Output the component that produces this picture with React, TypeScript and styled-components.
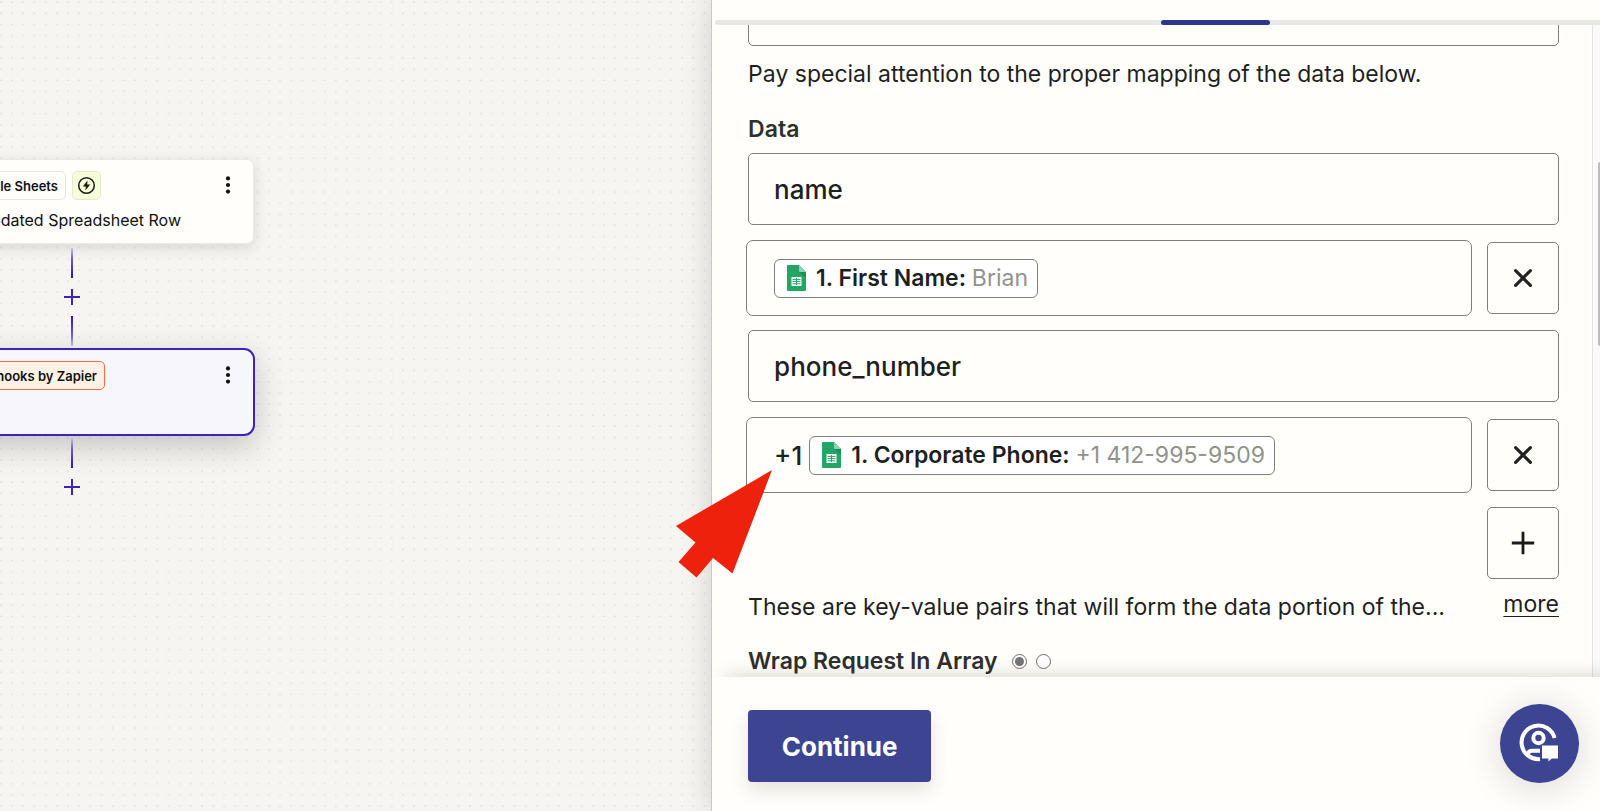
import React from "react";
import styled, { createGlobalStyle, css } from "styled-components";

const GlobalStyle = createGlobalStyle`
  * { box-sizing: border-box; }
  html, body, #root { height: 100%; }
  body {
    margin: 0;
    overflow: hidden;
    font-family: Inter, "Liberation Sans", sans-serif;
    color: #1f1f1f;
    background: #fffdf9;
  }
  button, input { font: inherit; color: inherit; }
`;

const line = "#7f7e7b";
const paper = "#fffefa";
const canvasTone = "#f6f5f2";
const violet = "#3f22bb";
const indigo = "#3d4592";

const Layout = styled.main`
  display: grid;
  grid-template-columns: 4fr 5fr;
  height: 100vh;
`;

/* ---------- canvas ---------- */

const Canvas = styled.section`
  position: relative;
  overflow: hidden;
  background: ${canvasTone};
`;

const DotGrid = styled.svg`
  position: absolute;
  inset: 0;
  width: 100%;
  height: 100%;
`;

const Flow = styled.div`
  position: absolute;
  top: 159px;
  left: -111px;
  width: 366px;
  display: flex;
  flex-direction: column;
  align-items: center;
`;

const StepCard = styled.article<{ $selected?: boolean }>`
  display: flex;
  flex-direction: column;
  gap: 10px;
  color: #111;
  ${(p) =>
    p.$selected
      ? css`
          width: 366px;
          height: 88px;
          padding: 11px 22px 11px 12px;
          border: 2px solid ${violet};
          border-radius: 11px;
          background: #f7f6fd;
          box-shadow: 0 10px 30px rgba(40, 36, 30, 0.24);
        `
      : css`
          width: 364px;
          height: 85px;
          padding: 11px 22px 11px 12px;
          border: 1px solid #ebe9e6;
          border-radius: 7px;
          background: ${paper};
          box-shadow: 0 4px 14px rgba(40, 36, 30, 0.14);
        `}
`;

const StepHead = styled.div`
  display: flex;
  align-items: flex-start;
  gap: 6px;
`;

const AppChip = styled.span<{ $accent?: boolean; $width: number }>`
  display: flex;
  align-items: center;
  justify-content: flex-end;
  width: ${(p) => p.$width}px;
  height: 29px;
  padding: 0 7px;
  border: 1px solid ${(p) => (p.$accent ? "#ff6a43" : "#e8e6e2")};
  border-radius: 5px;
  background: ${(p) => (p.$accent ? "#fff1e5" : paper)};
  font-size: 13px;
  font-weight: 600;
  white-space: nowrap;
`;

const TriggerChip = styled.span`
  display: grid;
  place-items: center;
  width: 29px;
  height: 29px;
  border: 1px solid #e6e8d4;
  border-radius: 5px;
  background: #f5fed8;
`;

const KebabButton = styled.button`
  margin: 5px 0 0 auto;
  padding: 0;
  border: 0;
  background: none;
  line-height: 0;
`;

const StepTitle = styled.div`
  width: 278px;
  font-size: 16px;
  line-height: 20px;
  font-weight: 400;
  text-align: right;
  white-space: nowrap;
`;

const Link = styled.div<{ $lead: number }>`
  display: flex;
  flex-direction: column;
  align-items: center;
  gap: 11px;
  padding: ${(p) => p.$lead}px 0 2px;
`;

const Wire = styled.span<{ $fade: "top" | "bottom" }>`
  width: 2px;
  height: 30px;
  background: linear-gradient(to ${(p) => p.$fade}, #c9c0f2, #6f5bd6 35%, #2f10b0);
`;

const AddStep = styled.button`
  display: block;
  padding: 0;
  border: 0;
  background: ${canvasTone};
  line-height: 0;
`;

/* ---------- side panel ---------- */

const Panel = styled.aside`
  position: relative;
  display: grid;
  grid-template-rows: 25px minmax(0, 1fr) auto;
  min-width: 0;
  border-left: 1px solid #cac9c7;
  background: ${paper};
  box-shadow: 0 0 28px rgba(40, 40, 40, 0.18);
`;

const TabRail = styled.nav`
  display: grid;
  grid-template-columns: 446fr 109fr 330fr;
  align-self: end;
  height: 5px;
  margin-left: 3px;
  border-radius: 3px 0 0 3px;
  background: #e8e7e3;
`;

const ActiveTab = styled.span`
  grid-column: 2;
  border-radius: 3px;
  background: #2d358c;
`;

const Body = styled.div`
  display: grid;
  grid-template-columns: minmax(0, 1fr) 8px;
  overflow: hidden;
`;

const Form = styled.form`
  display: flex;
  flex-direction: column;
  padding: 0 33px 0 36px;
  overflow: hidden;
`;

const ScrollTrack = styled.div`
  overflow: hidden;
  border-left: 1px solid #e3e3e3;
  background: #fafafa;
`;

const ScrollThumb = styled.div`
  height: 184px;
  margin: 137px 0 0 5px;
  border-radius: 3px 0 0 3px;
  background: #bdbdbd;
`;

const TextField = styled.input`
  flex: none;
  width: 100%;
  height: 72px;
  padding: 0 25px;
  border: 1px solid ${line};
  border-radius: 5px;
  outline: 0;
  background: ${paper};
  font-size: 26px;
  font-weight: 500;
`;

const ScrolledField = styled(TextField)`
  margin-top: -51px;
`;

const Help = styled.p`
  margin: 0;
  font-size: 23px;
  line-height: 32px;
  white-space: nowrap;
`;

const IntroHelp = styled(Help)`
  margin: 12px 0 23px;
`;

const Label = styled.label`
  font-size: 23px;
  line-height: 32px;
  font-weight: 600;
  color: #2f2f2f;
`;

const Pairs = styled.div`
  display: flex;
  flex-direction: column;
  gap: 16px;
  margin-top: 8px;
`;

const Pair = styled.div`
  display: grid;
  gap: 17px;
`;

const ValueRow = styled.div`
  display: grid;
  grid-template-columns: minmax(0, 1fr) 72px;
  column-gap: 17px;
  height: 72px;
`;

const ValueBox = styled.div`
  display: flex;
  align-items: center;
  gap: 7px;
  margin: -2px;
  padding: 0 27px;
  border: 1px solid ${line};
  border-radius: 7px;
  font-size: 26px;
  font-weight: 500;
`;

const Token = styled.span`
  display: flex;
  align-items: center;
  height: 39px;
  padding: 0 9px 0 12px;
  border: 1px solid ${line};
  border-radius: 6px;
  background: #fff;
  font-size: 23px;
  font-weight: 600;
  white-space: pre;

  svg { margin-right: 10px; }
`;

const Sample = styled.span`
  font-weight: 400;
  color: #92918c;
`;

const SquareButton = styled.button`
  display: grid;
  place-items: center;
  width: 72px;
  height: 72px;
  padding: 0;
  border: 1px solid ${line};
  border-radius: 5px;
  background: ${paper};
`;

const AddRow = styled.div`
  display: flex;
  justify-content: flex-end;
`;

const HelpRow = styled.div`
  display: flex;
  justify-content: space-between;
  align-items: flex-start;
  margin-top: 11px;
`;

const HelpText = styled(Help)`
  padding-top: 1px;
`;

const MoreLink = styled.a`
  font-size: 23px;
  line-height: 28px;
  color: #1f1f1f;
  text-decoration-thickness: 1px;
  text-underline-offset: 4px;
`;

const WrapGroup = styled.fieldset`
  display: flex;
  align-items: center;
  margin: 22px 0 0;
  padding: 0;
  border: 0;
`;

const Radios = styled.div`
  display: flex;
  gap: 9px;
  margin-left: 14px;
`;

const Radio = styled.input`
  appearance: none;
  display: grid;
  place-items: center;
  width: 15px;
  height: 15px;
  margin: 0;
  border: 1px solid #6f6f6f;
  border-radius: 50%;
  background: #fff;

  &:checked::before {
    content: "";
    width: 9px;
    height: 9px;
    border-radius: 50%;
    background: #757575;
  }
`;

const Footer = styled.footer`
  position: relative;
  display: flex;
  align-items: center;
  justify-content: space-between;
  height: 134px;
  padding: 4px 21px 0 36px;
  background: ${paper};
  box-shadow: 12px -4px 16px -2px rgba(60, 58, 50, 0.2);
  clip-path: inset(-24px 0 0 0);
`;

const ContinueButton = styled.button`
  width: 183px;
  height: 72px;
  padding: 0;
  border: 0;
  border-radius: 4px;
  background: ${indigo};
  box-shadow: 0 8px 18px rgba(50, 50, 40, 0.13);
  color: #fff;
  font-size: 26px;
  font-weight: 700;
`;

const ChatButton = styled.button`
  width: 79px;
  height: 79px;
  margin-bottom: 6px;
  padding: 0;
  border: 0;
  border-radius: 50%;
  background: ${indigo};
  box-shadow: 0 4px 36px rgba(40, 40, 40, 0.18);
  line-height: 0;
`;

const Pointer = styled.svg`
  position: absolute;
  top: 470px;
  left: -36px;
  pointer-events: none;
`;

/* ---------- icons ---------- */

const Kebab = () => (
  <svg width="6" height="18" viewBox="0 0 6 18" fill="#111">
    <circle cx="3" cy="2.4" r="2.1" />
    <circle cx="3" cy="9" r="2.1" />
    <circle cx="3" cy="15.6" r="2.1" />
  </svg>
);

const Bolt = () => (
  <svg width="19" height="19" viewBox="0 0 19 19" fill="none">
    <circle cx="9.5" cy="9.5" r="7.8" stroke="#1a1a1a" strokeWidth="1.5" />
    <path d="M10.5 4.6 5.8 10.5h3L8.4 14.5l4.8-6h-3z" fill="#1a1a1a" />
  </svg>
);

const SmallPlus = () => (
  <svg width="16" height="16" viewBox="0 0 16 16" stroke={violet} strokeWidth="2">
    <path d="M8 0v16M0 8h16" />
  </svg>
);

const SheetIcon = () => (
  <svg width="19" height="26" viewBox="0 0 19 26">
    <path d="M1 0h11l7 7v18a1 1 0 0 1-1 1H1a1 1 0 0 1-1-1V1a1 1 0 0 1 1-1z" fill="#23a566" />
    <path d="M12 7h7v6z" fill="#1c8f55" />
    <path d="M12 0l7 7h-6a1 1 0 0 1-1-1z" fill="#8fd2b0" />
    <path d="M4.5 12h10v9h-10z" fill="#fff" />
    <path d="M5.5 14.4h8M5.5 16.6h8M5.5 18.8h8M9.5 13v7" stroke="#23a566" strokeWidth="1" />
  </svg>
);

const Cross = () => (
  <svg width="20" height="20" viewBox="0 0 20 20" stroke="#222" strokeWidth="3.2" strokeLinecap="round">
    <path d="M2.6 2.6l14.8 14.8M17.4 2.6L2.6 17.4" />
  </svg>
);

const BigPlus = () => (
  <svg width="24" height="24" viewBox="0 0 24 24" stroke="#1a1a1a" strokeWidth="2.8">
    <path d="M12 .8v22.4M.8 12h22.4" />
  </svg>
);

const ChatIcon = () => (
  <svg width="79" height="79" viewBox="0 0 79 79" fill="none">
    <path d="M54.6 34A16.8 16.8 0 1 0 40 55.1" stroke="#fff" strokeWidth="4" />
    <circle cx="38.5" cy="34" r="5.2" stroke="#fff" strokeWidth="4" />
    <path d="M40 46.8h-8q-3 0-4.5 3" stroke="#fff" strokeWidth="4" />
    <path d="M42 41.4h16v13.2h-6.2l-3.4 3v-3H42z" fill="#fff" />
  </svg>
);

const ValueEntry = ({ children }: { children: React.ReactNode }) => (
  <ValueRow>
    <ValueBox role="textbox" tabIndex={0} aria-label="Value">
      {children}
    </ValueBox>
    <SquareButton type="button" aria-label="Remove pair">
      <Cross />
    </SquareButton>
  </ValueRow>
);

export default function App() {
  return (
    <>
      <GlobalStyle />
      <Layout>
        <Canvas>
          <DotGrid aria-hidden="true">
            <defs>
              <pattern id="dots" width="11.167" height="11.167" patternUnits="userSpaceOnUse">
                <rect x="0.2" y="1.4" width="1.4" height="1.4" fill="#dedcd9" />
              </pattern>
            </defs>
            <rect width="100%" height="100%" fill="url(#dots)" />
          </DotGrid>
          <Flow>
            <StepCard>
              <StepHead>
                <AppChip $width={163}>Google Sheets</AppChip>
                <TriggerChip>
                  <Bolt />
                </TriggerChip>
                <KebabButton type="button" aria-label="Step options">
                  <Kebab />
                </KebabButton>
              </StepHead>
              <StepTitle>New or Updated Spreadsheet Row</StepTitle>
            </StepCard>
            <Link $lead={4}>
              <Wire $fade="bottom" />
              <AddStep type="button" aria-label="Add step">
                <SmallPlus />
              </AddStep>
              <Wire $fade="top" />
            </Link>
            <StepCard $selected>
              <StepHead>
                <AppChip $accent $width={202}>Webhooks by Zapier</AppChip>
                <KebabButton type="button" aria-label="Step options">
                  <Kebab />
                </KebabButton>
              </StepHead>
            </StepCard>
            <Link $lead={2}>
              <Wire $fade="bottom" />
              <AddStep type="button" aria-label="Add step">
                <SmallPlus />
              </AddStep>
            </Link>
          </Flow>
        </Canvas>

        <Panel>
          <TabRail>
            <ActiveTab />
          </TabRail>
          <Body>
            <Form>
              <ScrolledField aria-label="Option" />
              <IntroHelp>Pay special attention to the proper mapping of the data below.</IntroHelp>
              <Label htmlFor="key-1">Data</Label>
              <Pairs>
                <Pair>
                  <TextField id="key-1" defaultValue="name" />
                  <ValueEntry>
                    <Token>
                      <SheetIcon />
                      1. First Name: <Sample>Brian</Sample>
                    </Token>
                  </ValueEntry>
                </Pair>
                <Pair>
                  <TextField aria-label="Key" defaultValue="phone_number" />
                  <ValueEntry>
                    <span>+1</span>
                    <Token>
                      <SheetIcon />
                      1. Corporate Phone: <Sample>+1 412-995-9509</Sample>
                    </Token>
                  </ValueEntry>
                </Pair>
                <AddRow>
                  <SquareButton type="button" aria-label="Add pair">
                    <BigPlus />
                  </SquareButton>
                </AddRow>
              </Pairs>
              <HelpRow>
                <HelpText>These are key-value pairs that will form the data portion of the...</HelpText>
                <MoreLink href="#more">more</MoreLink>
              </HelpRow>
              <WrapGroup aria-labelledby="wrap-label">
                <Label as="span" id="wrap-label">
                  Wrap Request In Array
                </Label>
                <Radios>
                  <Radio type="radio" name="wrap" aria-label="Yes" defaultChecked />
                  <Radio type="radio" name="wrap" aria-label="No" />
                </Radios>
              </WrapGroup>
            </Form>
            <ScrollTrack>
              <ScrollThumb />
            </ScrollTrack>
          </Body>
          <Footer>
            <ContinueButton type="button">Continue</ContinueButton>
            <ChatButton type="button" aria-label="Support chat">
              <ChatIcon />
            </ChatButton>
          </Footer>
          <Pointer width="97" height="108" viewBox="0 0 97 108" aria-hidden="true">
            <path d="M96 0L0 56l19.5 16.5L2.5 92l18 15.5L37 88l19.5 15.5z" fill="#ee220c" />
          </Pointer>
        </Panel>
      </Layout>
    </>
  );
}
